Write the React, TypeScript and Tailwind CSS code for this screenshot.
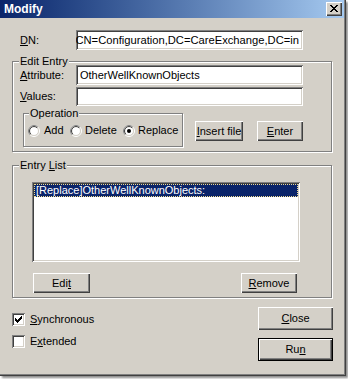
import React, { useId } from "react";

const FONT = "font-['Liberation_Sans','Arial',sans-serif]";
const raised = "shadow-[inset_1px_1px_#ffffff,inset_-1px_-1px_#404040,inset_-2px_-2px_#808080]";
const sunken = "shadow-[inset_1px_1px_#808080,inset_-1px_-1px_#ffffff,inset_2px_2px_#404040,inset_-2px_-2px_#d4d0c8]";
const etched = "border border-[#808080] shadow-[inset_1px_1px_#ffffff,1px_1px_#ffffff]";

function U({ children }: { children: React.ReactNode }) {
  return <span className="underline decoration-1 underline-offset-[1px]">{children}</span>;
}

function Radio({ checked }: { checked?: boolean }) {
  const id = useId().replace(/:/g, "");
  return (
    <svg width="12" height="12" viewBox="0 0 12 12" className="shrink-0">
      <defs>
        <clipPath id={`tl${id}`}>
          <polygon points="0,0 12,0 0,12" />
        </clipPath>
      </defs>
      <circle cx="6" cy="6" r="5.5" fill="none" stroke="#ffffff" strokeWidth="1" />
      <circle cx="6" cy="6" r="5.5" fill="none" stroke="#808080" strokeWidth="1" clipPath={`url(#tl${id})`} />
      <circle cx="6" cy="6" r="4.5" fill="#ffffff" stroke="#d4d0c8" strokeWidth="1" />
      <circle cx="6" cy="6" r="4.5" fill="none" stroke="#404040" strokeWidth="1" clipPath={`url(#tl${id})`} />
      {checked && <circle cx="6" cy="6" r="2" fill="#000000" />}
    </svg>
  );
}

function Check({ checked }: { checked?: boolean }) {
  const cols = [2, 3, 4, 3, 2, 1, 0];
  return (
    <div className={`w-[13px] h-[13px] bg-white ${sunken} shrink-0`}>
      {checked && (
        <svg width="13" height="13" viewBox="0 0 13 13">
          {cols.map((r, c) => (
            <rect key={c} x={3 + c} y={3 + r} width="1" height="3" fill="#000" />
          ))}
        </svg>
      )}
    </div>
  );
}

function Btn({ children, w, h, def }: { children: React.ReactNode; w: string; h: string; def?: boolean }) {
  if (def) {
    return (
      <div className={`${w} ${h} border border-black flex`}>
        <div className={`flex-1 flex items-center justify-center bg-[#d4d0c8] ${raised}`}>{children}</div>
      </div>
    );
  }
  return <div className={`${w} ${h} flex items-center justify-center bg-[#d4d0c8] ${raised}`}>{children}</div>;
}

function CloseX() {
  const rows = [
    [0, 1, 6, 7],
    [1, 2, 5, 6],
    [2, 3, 4, 5],
    [3, 4],
    [2, 3, 4, 5],
    [1, 2, 5, 6],
    [0, 1, 6, 7],
  ];
  return (
    <div className={`w-[16px] h-[14px] bg-[#d4d0c8] ${raised}`}>
      <svg width="16" height="14" viewBox="0 0 16 14">
        {rows.map((cs, r) => cs.map((c) => <rect key={`${r}-${c}`} x={4 + c} y={3 + r} width="1" height="1" fill="#000" />))}
      </svg>
    </div>
  );
}

export default function App() {
  return (
    <div className={`w-[348px] h-[379px] bg-white ${FONT} text-[11px] leading-[13px] text-black`}>
      <div className="w-[346px] h-[376px] bg-[#d4d0c8] flex flex-col pr-[2px] shadow-[inset_-1px_-1px_#404040,inset_-2px_-2px_#808080,2px_2px_2px_rgba(0,0,0,0.45)]">
        {/* title bar */}
        <div className="h-[18px] flex items-center justify-between pl-[4px] pr-[2px] bg-gradient-to-r from-[#0a246a] to-[#a6caf0]">
          <span className="text-white font-bold text-[12px] leading-[14px]">Modify</span>
          <CloseX />
        </div>

        {/* DN row */}
        <div className="mt-[12px] flex items-center pl-[20px]">
          <span className="w-[56px]"><U>D</U>N:</span>
          <div className={`w-[227px] h-[20px] bg-white ${sunken} overflow-hidden flex items-center justify-end pr-[4px]`}>
            <span className="whitespace-nowrap shrink-0 text-[11.2px]">CN=Configuration,DC=CareExchange,DC=in</span>
          </div>
        </div>

        {/* Edit Entry */}
        <div className={`mt-[11px] ml-[12px] w-[320px] h-[91px] ${etched} flex flex-col`}>
          <span className="-mt-[7px] -mb-[3px] ml-[6px] px-[1px] self-start bg-[#d4d0c8] h-[13px]">Edit Entry</span>
          <div className="flex items-center pl-[7px]">
            <span className="w-[56px]"><U>A</U>ttribute:</span>
            <div className={`w-[227px] h-[20px] bg-white ${sunken} flex items-center pl-[4px]`}>OtherWellKnownObjects</div>
          </div>
          <div className="mt-[2px] flex items-center pl-[7px]">
            <span className="w-[56px]"><U>V</U>alues:</span>
            <div className={`w-[227px] h-[19px] bg-white ${sunken}`} />
          </div>
          <div className="mt-[7px] flex items-start">
            <div className={`ml-[10px] w-[160px] h-[34px] ${etched} flex flex-col`}>
              <span className="-mt-[7px] ml-[5px] px-[1px] self-start bg-[#d4d0c8] h-[13px]">Operation</span>
              <div className="mt-[4px] flex items-center pl-[4px]">
                <div className="w-[42px] flex items-center gap-[4px]"><Radio /><span>Add</span></div>
                <div className="w-[53px] flex items-center gap-[3px]"><Radio /><span>Delete</span></div>
                <div className="flex items-center gap-[3px]"><Radio checked /><span>Replace</span></div>
              </div>
            </div>
            <div className="mt-[8px] ml-[12px] flex gap-[14px]">
              <Btn w="w-[48px]" h="h-[20px]"><span><U>I</U>nsert file</span></Btn>
              <Btn w="w-[46px]" h="h-[20px]"><span><U>E</U>nter</span></Btn>
            </div>
          </div>
        </div>

        {/* Entry List */}
        <div className={`mt-[13px] ml-[12px] w-[320px] h-[133px] ${etched} flex flex-col`}>
          <span className="-mt-[7px] ml-[6px] px-[1px] self-start bg-[#d4d0c8] h-[13px]">Entry <U>L</U>ist</span>
          <div className={`mt-[10px] ml-[19px] w-[268px] h-[80px] bg-white ${sunken} p-[2px]`}>
            <div className="h-[13px] bg-[#0a246a] border border-dotted border-[#f0dc90] text-white flex items-center pl-[1px] whitespace-nowrap">
              [Replace]OtherWellKnownObjects:
            </div>
          </div>
          <div className="mt-[11px] flex justify-between pl-[20px] pr-[34px]">
            <Btn w="w-[57px]" h="h-[20px]"><span>Edi<U>t</U></span></Btn>
            <Btn w="w-[56px]" h="h-[20px]"><span><U>R</U>emove</span></Btn>
          </div>
        </div>

        {/* bottom */}
        <div className="flex">
          <div className="ml-[12px] mt-[15px] flex flex-col gap-[9px]">
            <div className="flex items-center gap-[5px]"><Check checked /><span><U>S</U>ynchronous</span></div>
            <div className="flex items-center gap-[5px]"><Check /><span>E<U>x</U>tended</span></div>
          </div>
          <div className="ml-auto mr-[11px] mt-[9px] flex flex-col gap-[8px]">
            <Btn w="w-[75px]" h="h-[23px]"><span><U>C</U>lose</span></Btn>
            <Btn w="w-[75px]" h="h-[23px]" def><span>Ru<U>n</U></span></Btn>
          </div>
        </div>
      </div>
    </div>
  );
}
